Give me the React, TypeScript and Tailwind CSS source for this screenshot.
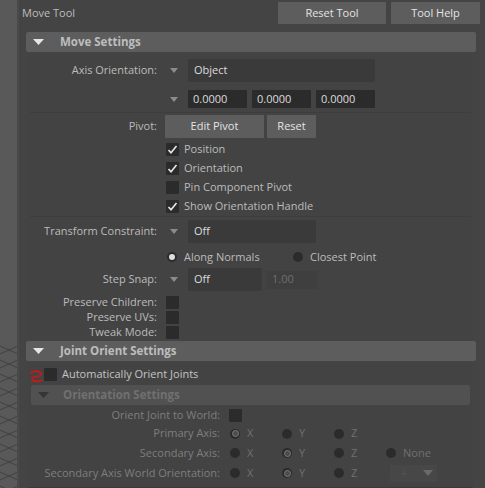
import type { ReactNode } from "react";

const font = { fontFamily: '"Open Sans", "Liberation Sans", sans-serif' };

function Arrow({ dim = false }: { dim?: boolean }) {
  return (
    <svg width="8" height="5" viewBox="0 0 8 5" className={dim ? "text-[#3a3a3a]" : "text-[#8c8c8c]"}>
      <path d="M0 0h8L4 5z" fill="currentColor" />
    </svg>
  );
}

function Check({ on = false }: { on?: boolean }) {
  return (
    <div className="w-[13px] h-[13px] bg-[#2b2b2b] rounded-[1px] flex items-center justify-center shrink-0">
      {on && (
        <svg width="11" height="11" viewBox="0 0 11 11">
          <path d="M1.5 6l2.5 2.8L9.5 2" stroke="#e8e8e8" strokeWidth="1.6" fill="none" />
        </svg>
      )}
    </div>
  );
}

function Radio({ on = false, dim = false }: { on?: boolean; dim?: boolean }) {
  return (
    <div className="w-[10px] h-[10px] rounded-full bg-[#2b2b2b] flex items-center justify-center shrink-0">
      {on &&
        (dim ? (
          <div className="w-[7px] h-[7px] rounded-full border border-[#7c7c7c] bg-[#4c4c4c]" />
        ) : (
          <div className="w-[6px] h-[6px] rounded-full bg-[#dedede]" />
        ))}
    </div>
  );
}

function Label({ children, w = "w-[129px]", dim = false }: { children?: ReactNode; w?: string; dim?: boolean }) {
  return (
    <div className={`${w} shrink-0 text-right whitespace-nowrap ${dim ? "text-[#7e7e7e]" : "text-[#bcbcbc]"}`}>
      {children}
    </div>
  );
}

function Header({ title }: { title: string }) {
  return (
    <div className="ml-[7px] mr-[9px] h-[20px] bg-[#5d5d5d] rounded-[2px] flex items-center">
      <div className="w-[34px] pl-[7px] flex">
        <svg width="11" height="6" viewBox="0 0 11 6">
          <path d="M0 0h11L5.5 6z" fill="#e6e6e6" />
        </svg>
      </div>
      <span className="font-bold text-[#bdbdbd] text-[11.5px]">{title}</span>
    </div>
  );
}

function RadioOpt({ on, label, dim, w }: { on?: boolean; label: string; dim?: boolean; w: string }) {
  return (
    <div className={`${w} flex items-center gap-[7px] shrink-0`}>
      <Radio on={on} dim={dim} />
      <span className={dim ? "text-[#707070]" : "text-[#bcbcbc]"}>{label}</span>
    </div>
  );
}

function ViewGrid() {
  const lines = [];
  for (let y = 346; y < 520; y += 14) {
    lines.push(<path key={"a" + y} d={`M0 ${y}L18 ${y + 8}`} />);
    lines.push(<path key={"b" + y} d={`M0 ${y + 8}L18 ${y}`} />);
  }
  return (
    <svg width="17" height="488" className="block">
      <g stroke="#3c3c3c" strokeWidth="0.8" fill="none">
        {lines}
      </g>
    </svg>
  );
}

export default function App() {
  return (
    <div className="w-[485px] h-[488px] overflow-hidden flex bg-[#444444] text-[11px]" style={font}>
      <div className="w-[17px] shrink-0 bg-[#595959]">
        <ViewGrid />
      </div>
      <div className="w-[2px] shrink-0 bg-[#4a4a4a]" />
      <div className="flex-1 flex flex-col">
        {/* tool title + buttons */}
        <div className="h-[31px] flex items-start pt-[2px] pr-[5px]">
          <div className="flex-1 pl-[3px] pt-[3px] text-[#bcbcbc]">Move Tool</div>
          <button className="w-[108px] h-[22px] bg-[#5d5d5d] text-[#e4e4e4] rounded-[1px]">Reset Tool</button>
          <button className="w-[89px] h-[22px] ml-[5px] bg-[#5d5d5d] text-[#e4e4e4] rounded-[1px]">Tool Help</button>
        </div>
        <div className="mt-[2px]">
          <Header title="Move Settings" />
        </div>

        {/* move settings body */}
        <div className="ml-[9px] mr-[12px] mt-[3px] bg-[#434343] flex flex-col">
          <div className="flex items-center h-[23px] mt-[4px]">
            <Label>Axis Orientation:</Label>
            <div className="w-[31px] flex justify-center pl-[2px]">
              <Arrow />
            </div>
            <div className="w-[187px] h-[23px] bg-[#3a3a3a] rounded-[2px] flex items-center pl-[6px] text-[#dcdcdc]">
              Object
            </div>
          </div>
          <div className="flex items-center h-[18px] mt-[8px]">
            <div className="w-[129px]" />
            <div className="w-[31px] flex justify-center pl-[2px]">
              <Arrow />
            </div>
            {["0.0000", "0.0000", "0.0000"].map((v, i) => (
              <div
                key={i}
                className={`w-[59px] h-[18px] bg-[#2b2b2b] rounded-[1px] flex items-center pl-[5px] text-[#dcdcdc] ${i ? "ml-[5px]" : ""}`}
              >
                {v}
              </div>
            ))}
          </div>
          <div className="h-px bg-[#3d3d3d] mt-[4px] mx-[2px]" />

          <div className="flex items-center h-[23px] mt-[2px]">
            <Label>Pivot:</Label>
            <div className="w-[8px]" />
            <button className="w-[99px] h-[23px] bg-[#5d5d5d] text-[#e4e4e4] rounded-[1px]">Edit Pivot</button>
            <button className="w-[49px] h-[23px] ml-[3px] bg-[#5d5d5d] text-[#e4e4e4] rounded-[1px]">Reset</button>
          </div>
          <div className="flex flex-col mt-[2px]">
            {[
              ["Position", true],
              ["Orientation", true],
              ["Pin Component Pivot", false],
              ["Show Orientation Handle", true],
            ].map(([t, on]) => (
              <div key={t as string} className="h-[19px] flex items-center pl-[138px] gap-[5px]">
                <Check on={on as boolean} />
                <span className="text-[#bcbcbc]">{t}</span>
              </div>
            ))}
          </div>
          <div className="h-px bg-[#3d3d3d] mx-[2px]" />

          <div className="flex items-center h-[23px] mt-[3px]">
            <Label>Transform Constraint:</Label>
            <div className="w-[31px] flex justify-center pl-[2px]">
              <Arrow />
            </div>
            <div className="w-[128px] h-[23px] bg-[#3a3a3a] rounded-[2px] flex items-center pl-[6px] text-[#dcdcdc]">
              Off
            </div>
          </div>
          <div className="flex items-center h-[20px] mt-[4px] pl-[139px]">
            <RadioOpt on label="Along Normals" w="w-[126px]" />
            <RadioOpt label="Closest Point" w="w-[120px]" />
          </div>
          <div className="flex items-center h-[23px] mt-[1px]">
            <Label>Step Snap:</Label>
            <div className="w-[31px] flex justify-center pl-[2px]">
              <Arrow />
            </div>
            <div className="w-[74px] h-[23px] bg-[#3a3a3a] rounded-[2px] flex items-center pl-[6px] text-[#dcdcdc]">
              Off
            </div>
            <div className="w-[50px] h-[18px] ml-[5px] bg-[#3f3f3f] rounded-[1px] flex items-center pl-[5px] text-[#6e6e6e]">
              1.00
            </div>
          </div>
          <div className="flex flex-col mt-[4px]">
            {["Preserve Children:", "Preserve UVs:", "Tweak Mode:"].map((t) => (
              <div key={t} className="h-[15px] flex items-center">
                <Label>{t}</Label>
                <div className="w-[9px]" />
                <Check />
              </div>
            ))}
          </div>
        </div>

        <div className="mt-[1px]">
          <Header title="Joint Orient Settings" />
        </div>

        {/* joint orient body */}
        <div className="ml-[9px] mr-[12px] mt-[3px] bg-[#434343] flex flex-col relative">
          <div className="h-[18px] flex items-center pl-[16px] gap-[5px] mt-[1px]">
            <Check />
            <span className="text-[#c4c4c4]">Automatically Orient Joints</span>
          </div>
          <svg width="18" height="16" viewBox="0 0 18 16" className="absolute left-0 top-[5px]">
            <path
              d="M3 4C5 1.5 11 1.5 13 4 14.5 6 12 7.5 8 7.5 4 7.5 3 10 5 11.5 7 12.5 11 12.5 14 11.5"
              stroke="#e01010"
              strokeWidth="1.5"
              fill="none"
              strokeLinecap="round"
              strokeLinejoin="round"
            />
          </svg>
          <div className="mt-[2px] mx-[3px] h-[20px] bg-[#515151] rounded-[2px] flex items-center">
            <div className="w-[32px] pl-[7px] flex">
              <svg width="11" height="6" viewBox="0 0 11 6">
                <path d="M0 0h11L5.5 6z" fill="#353535" />
              </svg>
            </div>
            <span className="font-bold text-[#707070] text-[11.5px]">Orientation Settings</span>
          </div>
          <div className="h-[18px] flex items-center mt-[1px]">
            <Label w="w-[192px]" dim>
              Orient Joint to World:
            </Label>
            <div className="w-[9px]" />
            <Check />
          </div>
          <div className="h-[19px] flex items-center">
            <Label w="w-[192px]" dim>
              Primary Axis:
            </Label>
            <div className="w-[10px]" />
            <RadioOpt on dim label="X" w="w-[52px]" />
            <RadioOpt dim label="Y" w="w-[52px]" />
            <RadioOpt dim label="Z" w="w-[52px]" />
          </div>
          <div className="h-[20px] flex items-center">
            <Label w="w-[192px]" dim>
              Secondary Axis:
            </Label>
            <div className="w-[10px]" />
            <RadioOpt dim label="X" w="w-[52px]" />
            <RadioOpt on dim label="Y" w="w-[52px]" />
            <RadioOpt dim label="Z" w="w-[52px]" />
            <RadioOpt dim label="None" w="w-[52px]" />
          </div>
          <div className="h-[20px] flex items-center">
            <Label w="w-[192px]" dim>
              Secondary Axis World Orientation:
            </Label>
            <div className="w-[10px]" />
            <RadioOpt dim label="X" w="w-[52px]" />
            <RadioOpt on dim label="Y" w="w-[52px]" />
            <RadioOpt dim label="Z" w="w-[52px]" />
            <div className="w-[28px] h-[17px] ml-[4px] bg-[#474747] flex items-center justify-center text-[#575757] text-[10px]">
              +
            </div>
            <div className="w-[19px] h-[17px] bg-[#474747] flex items-center justify-center">
              <svg width="10" height="6" viewBox="0 0 10 6">
                <path d="M0 0h10L5 6z" fill="#6a6a6a" />
              </svg>
            </div>
          </div>
          <div className="h-[4px]" />
          <div className="h-px bg-[#3a3a3a]" />
        </div>
      </div>
    </div>
  );
}
